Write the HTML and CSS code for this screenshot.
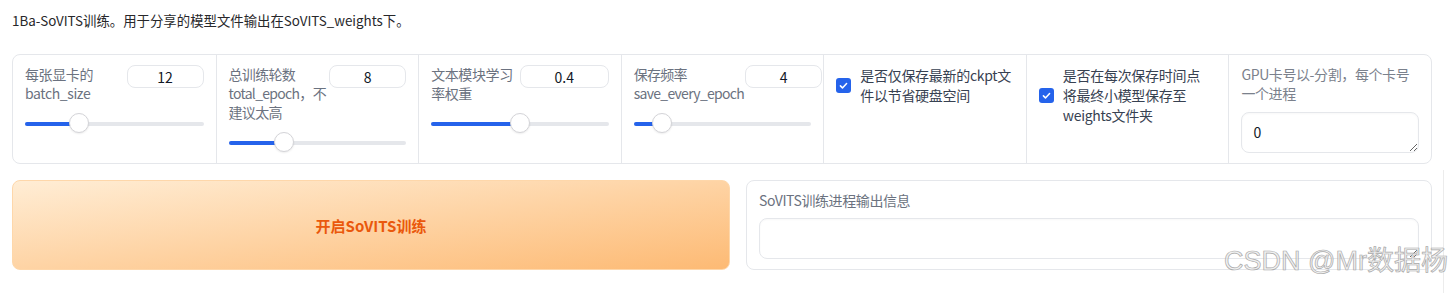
FILE: index.html
```html
<!DOCTYPE html>
<html lang="zh">
<head>
    <meta charset="UTF-8">
    <meta name="viewport" content="width=device-width, initial-scale=1.0">
    <title>SoVITS训练</title>
    <link rel="stylesheet" href="styles.css">
</head>
<body>
    <div class="page">
        <p class="intro">1Ba-SoVITS训练。用于分享的模型文件输出在SoVITS_weights下。</p>

        <!-- 训练参数 -->
        <div class="panel">
            <div class="cell">
                <div class="head">
                    <span class="lbl">每张显卡的batch_size</span>
                    <input class="num" type="text" value="12">
                </div>
                <div class="slider"><div class="fill" style="width:30%"></div><div class="thumb" style="left:30%"></div></div>
            </div>
            <div class="cell">
                <div class="head">
                    <span class="lbl tight">总训练轮数total_epoch，不建议太高</span>
                    <input class="num" type="text" value="8">
                </div>
                <div class="slider"><div class="fill" style="width:31%"></div><div class="thumb" style="left:31%"></div></div>
            </div>
            <div class="cell">
                <div class="head">
                    <span class="lbl">文本模块学习率权重</span>
                    <input class="num wide" type="text" value="0.4">
                </div>
                <div class="slider"><div class="fill" style="width:50%"></div><div class="thumb" style="left:50%"></div></div>
            </div>
            <div class="cell">
                <div class="head">
                    <span class="lbl tight">保存频率save_every_epoch</span>
                    <input class="num" type="text" value="4">
                </div>
                <div class="slider"><div class="fill" style="width:16%"></div><div class="thumb" style="left:16%"></div></div>
            </div>
            <div class="cell">
                <label class="check">
                    <span class="box"><svg viewBox="0 0 16 16" width="11" height="11"><path d="M3.5 8.5l3 3 6-6.5" fill="none" stroke="#fff" stroke-width="2.2" stroke-linecap="round" stroke-linejoin="round"/></svg></span>
                    <span class="ctext">是否仅保存最新的ckpt文件以节省硬盘空间</span>
                </label>
            </div>
            <div class="cell">
                <label class="check">
                    <span class="box"><svg viewBox="0 0 16 16" width="11" height="11"><path d="M3.5 8.5l3 3 6-6.5" fill="none" stroke="#fff" stroke-width="2.2" stroke-linecap="round" stroke-linejoin="round"/></svg></span>
                    <span class="ctext">是否在每次保存时间点<br>将最终小模型保存至weights文件夹</span>
                </label>
            </div>
            <div class="cell">
                <span class="lbl light">GPU卡号以-分割，每个卡号一个进程</span>
                <textarea class="gpu">0</textarea>
            </div>
        </div>

        <div class="actions">
            <button class="primary">开启SoVITS训练</button>
            <div class="output">
                <span class="lbl">SoVITS训练进程输出信息</span>
                <textarea class="info"></textarea>
            </div>
        </div>
    </div>

    <div class="edge"></div>
    <div class="watermark">CSDN @Mr数据杨</div>
</body>
</html>
```

FILE: styles.css
```css
body {
    font-family: "Noto Sans CJK SC", sans-serif;
    background-color: #fff;
    color: #1f2937;
    margin: 0;
    padding: 0;
}
.page {
    width: 1420px;
    margin-left: 12px;
}
.intro {
    margin: 0;
    padding-top: 10px;
    font-size: 13.4px;
    line-height: 20px;
    color: #27272a;
}
.panel {
    display: grid;
    grid-template-columns: repeat(7, minmax(0, 1fr));
    margin-top: 24px;
    border: 1px solid #e5e7eb;
    border-radius: 8px;
    height: 108px;
}
.cell {
    padding: 10px 12px;
    border-left: 1px solid #e5e7eb;
    min-width: 0;
}
.cell:first-child {
    border-left: none;
}
.head {
    display: flex;
    align-items: flex-start;
    gap: 1px;
}
.head .lbl {
    flex: 1 1 auto;
}
.lbl {
    display: block;
    font-size: 14px;
    line-height: 19px;
    letter-spacing: -0.4px;
    color: #6b7280;
}
.lbl.tight {
    letter-spacing: -0.7px;
}
.lbl.light {
    color: #7b818c;
}
.num {
    flex: 0 0 auto;
    width: 77px;
    height: 23px;
    box-sizing: border-box;
    border: 1px solid #e5e7eb;
    border-radius: 8px;
    text-align: center;
    font-family: inherit;
    font-size: 14px;
    color: #111827;
    padding: 0;
}
.num.wide {
    width: 89px;
}
.slider {
    position: relative;
    height: 4px;
    margin-top: 19px;
    background-color: #e5e7eb;
    border-radius: 2px;
}
.fill {
    height: 4px;
    background-color: #2563eb;
    border-radius: 2px;
}
.thumb {
    position: absolute;
    top: -9px;
    width: 20px;
    height: 20px;
    margin-left: -10px;
    box-sizing: border-box;
    border: 1px solid #d4d4d8;
    border-radius: 50%;
    background-color: #fff;
    box-shadow: 0 1px 2px rgba(0, 0, 0, 0.08);
}
.check {
    display: flex;
    align-items: center;
    gap: 9px;
}
.box {
    flex: 0 0 15px;
    height: 15px;
    border-radius: 3px;
    background-color: #2563eb;
    display: flex;
    align-items: center;
    justify-content: center;
}
.ctext {
    font-size: 14px;
    line-height: 20px;
    letter-spacing: -0.3px;
    color: #374151;
}
textarea {
    display: block;
    box-sizing: border-box;
    width: 100%;
    height: 41px;
    border: 1px solid #e5e7eb;
    border-radius: 8px;
    font-family: inherit;
    font-size: 14px;
    color: #111827;
    padding: 9px 11px;
    resize: vertical;
    box-shadow: inset 0 1px 2px rgba(0, 0, 0, 0.03);
}
.gpu {
    margin-top: 9px;
}
.actions {
    display: grid;
    grid-template-columns: 718px 1fr;
    gap: 16px;
    margin-top: 16px;
}
.primary {
    height: 90px;
    border: 1px solid #fed7aa;
    border-radius: 8px;
    background: linear-gradient(to bottom right, #ffedd5, #fdba74);
    color: #ea580c;
    font-family: inherit;
    font-size: 15px;
    font-weight: 600;
    cursor: pointer;
}
.output {
    height: 90px;
    box-sizing: border-box;
    border: 1px solid #e5e7eb;
    border-radius: 8px;
    padding: 10px 12px;
}
.info {
    margin-top: 8px;
}
.edge {
    position: absolute;
    left: 1443px;
    top: 170px;
    width: 1px;
    height: 123px;
    background-color: #ececec;
}
.watermark {
    position: absolute;
    right: 4px;
    top: 244px;
    font-family: "Liberation Sans", "Noto Sans CJK SC", sans-serif;
    font-size: 27px;
    line-height: 34px;
    color: rgba(235, 235, 235, 0.7);
    -webkit-text-stroke: 0.7px #a9a9a9;
}
```
